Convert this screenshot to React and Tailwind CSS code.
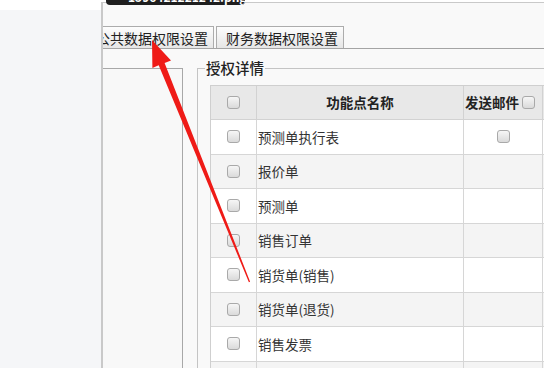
import React from 'react'

const rows = ['预测单执行表', '报价单', '预测单', '销售订单', '销货单(销售)', '销货单(退货)', '销售发票', '']

function Box() {
  return <span className="inline-block w-[13px] h-[13px] rounded-[3px] border border-[#a9a9a9] bg-gradient-to-b from-[#f6f6f6] to-[#dadada]" />
}

export default function App() {
  return (
    <div className="relative w-[544px] h-[368px] overflow-hidden flex bg-white" style={{ fontFamily: '"Noto Sans CJK SC", "Noto Sans", sans-serif' }}>
      {/* desktop area on the left */}
      <div className="w-[101px] flex flex-col shrink-0">
        <div className="h-[10px] bg-white" />
        <div className="flex-1 bg-[#f5f6f8]" />
      </div>

      {/* window */}
      <div className="flex-1 mt-[2px] border-l-2 border-t border-[#c9c9c9] bg-[#f9f9f9] flex flex-col overflow-hidden">
        {/* tabs */}
        <div className="pt-[22px] flex items-end border-b border-[#a4a4a4] h-[46px] shrink-0 overflow-hidden">
          <div className="ml-[-14px] h-[22px] pl-[6px] pr-[5px] flex items-center border border-b-0 border-[#acacac] bg-gradient-to-b from-[#fdfdfd] to-[#e6e6e6] text-[14px] text-[#222] leading-none whitespace-nowrap">公共数据权限设置</div>
          <div className="ml-[2px] h-[22px] w-[128px] pl-[9px] flex items-center border border-b-0 border-[#acacac] bg-gradient-to-b from-[#fdfdfd] to-[#e6e6e6] text-[14px] text-[#222] leading-none whitespace-nowrap">财务数据权限设置</div>
        </div>

        <div className="flex flex-1 pt-[19px] min-h-0">
          {/* left list box */}
          <div className="w-[80px] border-t border-r border-[#a8a8a8] bg-[#f8f8f8] shrink-0" />

          {/* group box */}
          <div className="flex-1 ml-[14px] relative border-l border-t border-[#c4c4c4]">
            <div className="absolute left-[7px] top-[-9px] px-[1px] bg-[#f9f9f9] text-[14.5px] leading-[16px] font-medium text-[#222]">授权详情</div>

            <div className="ml-[12px] mt-[16px] border-l border-t border-[#cfcfcf] text-[13.5px] text-[#333] w-[400px]">
              {/* header */}
              <div className="flex h-[34px] bg-[#e8e8e8] border-b border-[#d2d2d2]">
                <div className="w-[46px] flex items-center justify-center border-r border-[#d2d2d2]"><Box /></div>
                <div className="w-[207px] flex items-center justify-center border-r border-[#d2d2d2] font-semibold text-[#222]">功能点名称</div>
                <div className="w-[79px] flex items-center pl-[1px] gap-[3px] border-r border-[#d2d2d2] font-semibold text-[#222] whitespace-nowrap">发送邮件<Box /></div>
                <div className="w-[60px] flex items-center pl-[1px] text-[#999]">是</div>
              </div>
              {rows.map((r, i) => (
                <div key={i} className={'flex h-[34.5px] border-b border-[#d6d6d6] ' + (i % 2 === 1 ? 'bg-[#f4f4f4]' : 'bg-white')}>
                  <div className="w-[46px] flex items-center justify-center border-r border-[#d6d6d6]">{r && <Box />}</div>
                  <div className="w-[207px] flex items-center pl-[1px] border-r border-[#d6d6d6] whitespace-nowrap">{r}</div>
                  <div className="w-[79px] flex items-center justify-center border-r border-[#d6d6d6]">{i === 0 && <Box />}</div>
                  <div className="w-[60px]" />
                </div>
              ))}
            </div>
          </div>
        </div>
      </div>

      {/* file name tooltip at the top */}
      <div className="absolute left-[106px] top-0 w-[139px] h-[5px] bg-[#1e1e1e] rounded-b-[4px] overflow-hidden">
        <div className="mt-[-9px] pl-[22px] text-[12px] leading-[12px] font-bold text-white whitespace-nowrap">1596421221242.png</div>
      </div>

      {/* red annotation arrow */}
      <svg className="absolute left-0 top-0 pointer-events-none" width="544" height="368" viewBox="0 0 544 368">
        <polygon
          points="152,40 171,60.4 164.6,62.9 250.1,281.8 248.9,282.2 158.7,65.3 152.4,67.9"
          fill="#ef1b17"
        />
      </svg>
    </div>
  )
}
